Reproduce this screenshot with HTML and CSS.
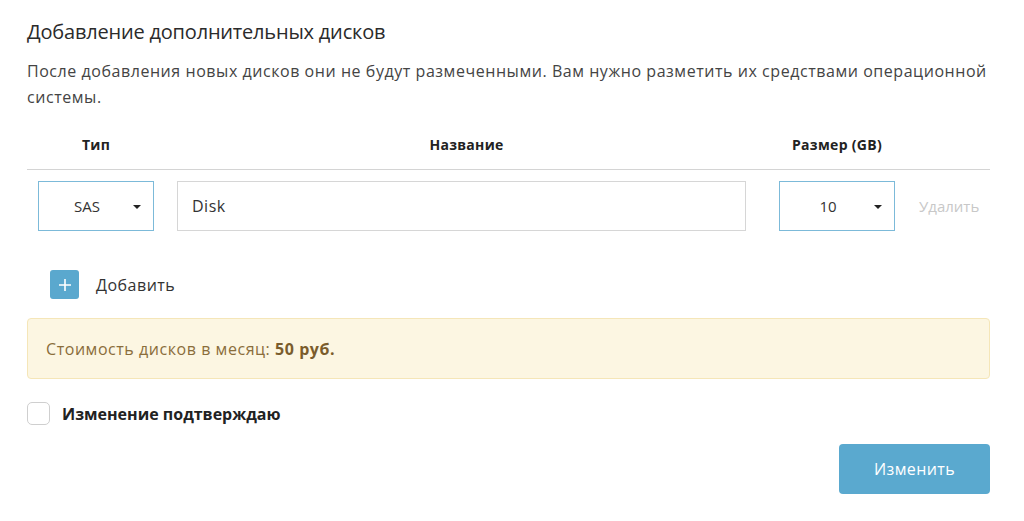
FILE: index.html
```html
<!DOCTYPE html>
<html lang="ru">
<head>
<meta charset="utf-8">
<link rel="stylesheet" href="styles.css">
</head>
<body>
<div class="panel">
  <h2 class="title">Добавление дополнительных дисков</h2>
  <p class="note">После добавления новых дисков они не будут размеченными. Вам нужно разметить их средствами операционной системы.</p>

  <div class="table">
    <div class="thead">
      <div class="c-type">Тип</div>
      <div class="c-name">Название</div>
      <div class="c-size">Размер (GB)</div>
      <div class="c-del"></div>
    </div>
    <div class="trow">
      <div class="c-type">
        <div class="select"><span>SAS</span><i class="caret"></i></div>
      </div>
      <div class="c-name">
        <div class="input">Disk</div>
      </div>
      <div class="c-size">
        <div class="select"><span>10</span><i class="caret"></i></div>
      </div>
      <div class="c-del"><span class="del">Удалить</span></div>
    </div>
  </div>

  <div class="add">
    <span class="add-btn"><svg width="14" height="14" viewBox="0 0 14 14"><path d="M7 1v12M1 7h12" stroke="#fff" stroke-width="1.6"/></svg></span>
    <span class="add-label">Добавить</span>
  </div>

  <div class="cost">Стоимость дисков в месяц: <b>50 руб.</b></div>

  <label class="confirm"><span class="box"></span><span class="confirm-label">Изменение подтверждаю</span></label>

  <div class="actions"><button class="submit">Изменить</button></div>
</div>
</body>
</html>
```

FILE: styles.css
```css
* { box-sizing: border-box; }
html, body { margin: 0; background: #fff; }
body {
  font-family: "Open Sans", "Noto Sans", sans-serif;
  color: #333;
}
.panel {
  width: 1024px;
  padding: 18px 34px 0 27px;
}
.title {
  margin: 0;
  font-size: 20px;
  font-weight: 400;
  line-height: 28px;
  color: #2b2b2b;
  letter-spacing: -0.2px;
}
.note {
  margin: 12px 0 0;
  font-size: 16px;
  line-height: 26px;
  color: #444;
  letter-spacing: 0.55px;
}
.table { margin-top: 16px; }
.thead, .trow {
  display: flex;
  align-items: center;
}
.thead {
  height: 44px;
  border-bottom: 1px solid #d4d4d4;
  font-size: 14px;
  font-weight: 700;
  color: #222;
  padding-bottom: 6px;
  letter-spacing: 0.3px;
}
.thead > div { text-align: center; }
.trow { padding-top: 11px; }
.c-type { width: 138px; padding: 0 11px; }
.c-name { width: 593px; padding: 0 12px; }
.c-size { width: 149px; padding: 0 12px 0 21px; }
.c-del { flex: 1; padding-left: 12px; }
.thead .c-name { padding-left: 22px; }
.select {
  height: 50px;
  border: 1px solid #7cbad9;
  display: flex;
  align-items: center;
  justify-content: center;
  position: relative;
  font-size: 15px;
  color: #333;
  padding-right: 18px;
}
.caret {
  position: absolute;
  right: 12px;
  top: 23px;
  width: 0; height: 0;
  border-left: 4px solid transparent;
  border-right: 4px solid transparent;
  border-top: 4px solid #222;
}
.input {
  height: 50px;
  border: 1px solid #d6d6d6;
  display: flex;
  align-items: center;
  padding-left: 14px;
  font-size: 16px;
  color: #333;
  letter-spacing: 0.5px;
}
.del { font-size: 15px; color: #c8c8c8; }
.add {
  display: flex;
  align-items: center;
  margin: 39px 0 0 23px;
}
.add-btn {
  width: 29px; height: 29px;
  border-radius: 3px;
  background: #5aa8ce;
  display: flex; align-items: center; justify-content: center;
}
.add-label { margin-left: 17px; font-size: 16px; color: #333; letter-spacing: 0.5px; }
.cost {
  margin-top: 19px;
  height: 61px;
  border: 1px solid #f5e6b8;
  border-radius: 4px;
  background: #fcf6e2;
  display: flex; align-items: center;
  padding-left: 18px;
  font-size: 16px;
  color: #8a6d3b;
  letter-spacing: 0.55px;
  white-space: pre;
}
.cost b { font-weight: 700; color: #7a5c2c; }
.confirm {
  display: flex; align-items: center;
  margin-top: 23px;
}
.box {
  width: 23px; height: 23px;
  border: 1px solid #cfcfcf;
  border-radius: 5px;
  background: #fff;
}
.confirm-label { margin-left: 12px; font-size: 16px; font-weight: 700; color: #222; }
.actions { display: flex; justify-content: flex-end; margin-top: 19px; }
.submit {
  width: 151px; height: 50px;
  border: 0; border-radius: 4px;
  background: #5aa9cf;
  color: #fff;
  font: 400 16px "Open Sans", sans-serif;
  letter-spacing: 0.4px;
}
```
